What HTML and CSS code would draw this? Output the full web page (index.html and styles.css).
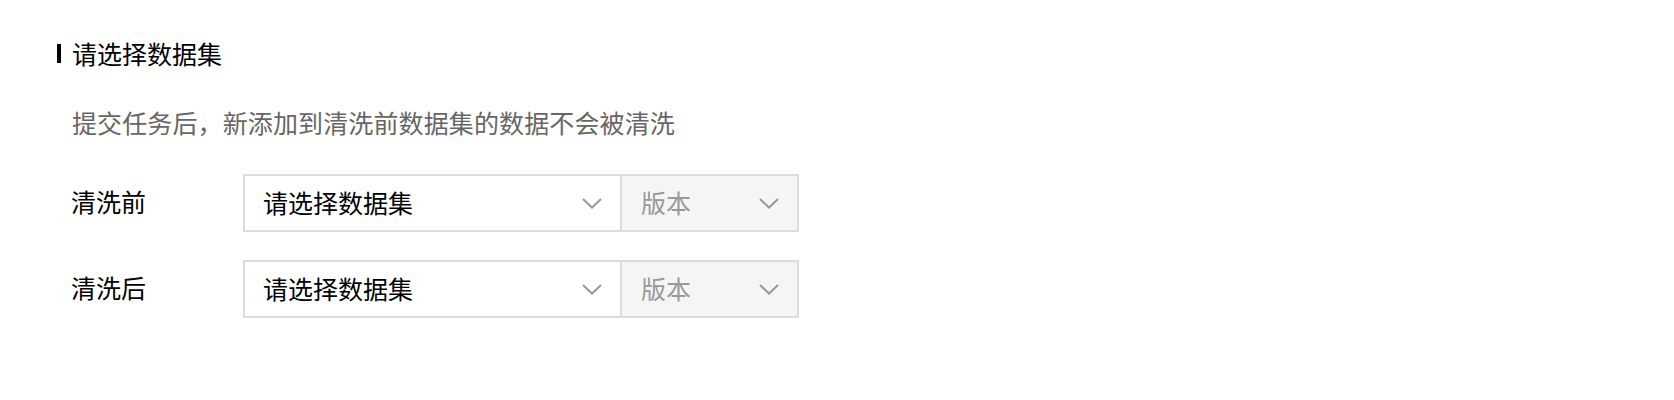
FILE: index.html
```html
<!DOCTYPE html>
<html lang="zh-CN">

<head>
    <meta charset="UTF-8">
    <title>清洗任务</title>
    <link rel="stylesheet" href="styles.css">
</head>

<body>
    <div class="page">
        <h2 class="title"><span class="bar"></span>请选择数据集</h2>

        <p class="tip">提交任务后，新添加到清洗前数据集的数据不会被清洗</p>

        <div class="row">
            <label class="label">清洗前</label>
            <div class="select main">
                <span class="value">请选择数据集</span>
                <svg class="arrow" viewBox="0 0 20 11"><path d="M1 1 L10 9.5 L19 1" /></svg>
            </div>
            <div class="select version">
                <span class="placeholder">版本</span>
                <svg class="arrow" viewBox="0 0 20 11"><path d="M1 1 L10 9.5 L19 1" /></svg>
            </div>
        </div>

        <div class="row">
            <label class="label">清洗后</label>
            <div class="select main">
                <span class="value">请选择数据集</span>
                <svg class="arrow" viewBox="0 0 20 11"><path d="M1 1 L10 9.5 L19 1" /></svg>
            </div>
            <div class="select version">
                <span class="placeholder">版本</span>
                <svg class="arrow" viewBox="0 0 20 11"><path d="M1 1 L10 9.5 L19 1" /></svg>
            </div>
        </div>
    </div>
</body>

</html>
```

FILE: styles.css
```css
html,
body {
    margin: 0;
    background: #FFF;
}

body {
    font-family: "Noto Sans CJK SC", "Noto Sans", sans-serif;
    color: #000;
}

.page {
    padding: 31px 0 0 57px;
}

.title {
    display: flex;
    align-items: center;
    margin: 0;
    height: 44px;
    font-size: 25px;
    font-weight: normal;
}

.bar {
    display: inline-block;
    width: 4px;
    height: 19px;
    background: #000;
    margin-right: 11px;
}

.tip {
    margin: 29px 0 0 15px;
    line-height: 36px;
    font-size: 25px;
    letter-spacing: 0.12px;
    color: #666;
}

.row {
    display: flex;
    align-items: center;
    margin-top: 34px;
}

.row + .row {
    margin-top: 28px;
}

.label {
    width: 172px;
    margin-left: 14px;
    padding-bottom: 4px;
    font-size: 25px;
}

.select {
    display: flex;
    align-items: center;
    justify-content: space-between;
    box-sizing: border-box;
    height: 58px;
    border: 2px solid #dcdcdc;
    font-size: 25px;
}

.value {
    padding-bottom: 2px;
}

.main {
    width: 379px;
    padding: 0 18px 0 18px;
    background: #FFF;
}

.version {
    width: 177px;
    padding: 0 18px 0 19px;
    border-left: none;
    background: #f5f5f5;
}

.placeholder {
    color: #999;
    padding-bottom: 2px;
}

.arrow {
    width: 20px;
    height: 11px;
    fill: none;
    stroke: #999;
    stroke-width: 2;
}
```
